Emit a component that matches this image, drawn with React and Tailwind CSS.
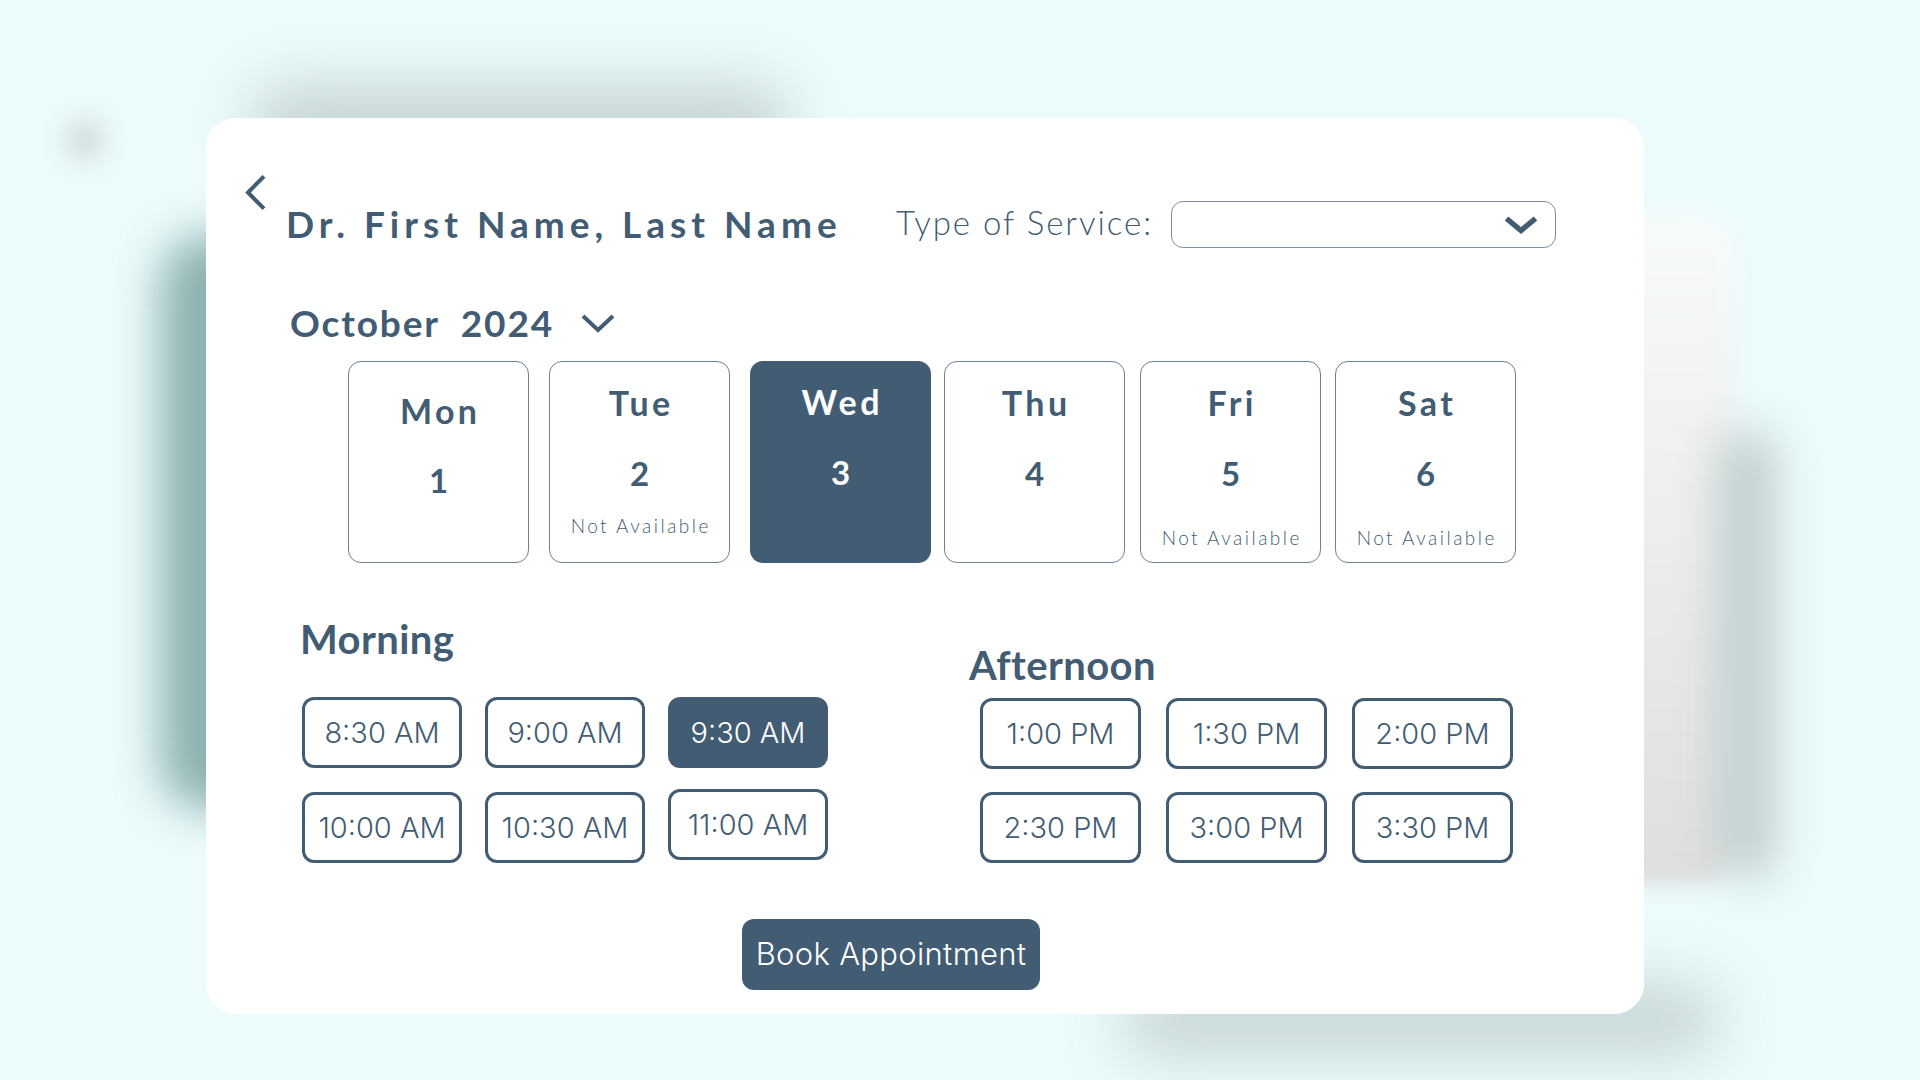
import React from "react";

const C = "#425d73";

function Chevron({ w, h, sw, className, dir = "down" }) {
  const pts =
    dir === "down"
      ? `${sw},${sw} ${w / 2},${h - sw} ${w - sw},${sw}`
      : `${w - sw},${sw / 1.2} ${sw},${h / 2} ${w - sw},${h - sw / 1.2}`;
  return (
    <svg width={w} height={h} viewBox={`0 0 ${w} ${h}`} className={className}>
      <polyline points={pts} fill="none" stroke={C} strokeWidth={sw} strokeLinejoin="miter" />
    </svg>
  );
}

function DayCard({ name, num, na, selected, nameTop, numGap, naGap, className }) {
  return (
    <div
      className={
        "w-[181px] h-[202px] rounded-[13px] flex flex-col items-center " +
        (selected ? "bg-[#425d73] text-white " : "border border-[#6b8194] text-[#425d73] ") +
        className
      }
      style={{ paddingTop: nameTop }}
    >
      <div className="text-[34px] leading-[34px] font-bold tracking-[0.1em] pl-[0.1em]">{name}</div>
      <div className="text-[33px] leading-[33px] font-bold" style={{ marginTop: numGap }}>
        {num}
      </div>
      {na && (
        <div
          className="text-[19px] leading-[20px] font-light tracking-[0.13em] pl-[0.13em]"
          style={{ marginTop: naGap }}
        >
          Not Available
        </div>
      )}
    </div>
  );
}

function Slot({ t, selected, className = "" }) {
  return (
    <div
      className={
        "w-[160px] h-[71px] rounded-[12px] flex items-center justify-center text-[29px] " +
        (selected ? "bg-[#425d73] text-white " : "border-[3px] border-[#425d73] text-[#425d73] ") +
        className
      }
      style={{ fontFamily: "Inter, sans-serif", fontWeight: 300 }}
    >
      {t}
    </div>
  );
}

export default function App() {
  return (
    <div
      className="relative w-[1920px] h-[1080px] overflow-hidden bg-[#ecfbfc]"
      style={{ fontFamily: "Lato, 'Liberation Sans', sans-serif" }}
    >
      {/* decorative blurred shadows behind the card */}
      <div className="absolute left-[250px] top-[85px] w-[540px] h-[80px] rounded-[40px] bg-[#c6d4d5] blur-[28px]" />
      <div className="absolute left-[66px] top-[118px] w-[38px] h-[44px] rounded-full bg-[#d2dfe0] blur-[12px]" />
      <div className="absolute left-[160px] top-[235px] w-[260px] h-[575px] rounded-[50px] bg-[#8db2b0] blur-[22px]" />
      <div className="absolute left-[1500px] top-[215px] w-[235px] h-[670px] rounded-[40px] bg-gradient-to-b from-[#f8fbfb] via-[#ececec] to-[#dedede] blur-[10px]" />
      <div className="absolute left-[1720px] top-[430px] w-[55px] h-[450px] rounded-[30px] bg-[#bfcccd] blur-[22px]" />
      <div className="absolute left-[1120px] top-[985px] w-[600px] h-[70px] rounded-full bg-[#bccaca] blur-[30px] opacity-80" />

      <div className="relative pt-[118px] pl-[206px]">
        <div className="w-[1438px] h-[896px] rounded-[30px] bg-white text-[#425d73] flex flex-col">
          {/* header */}
          <div className="flex items-start pt-[55px] pl-[38px]">
            <Chevron w={24} h={39} sw={4} dir="left" />
            <div className="ml-[18px] mt-[32px] w-[610px] text-[37px] leading-[37px] font-bold tracking-[0.135em]">
              Dr. First Name, Last Name
            </div>
            <div className="mt-[33px] w-[275px] text-[33px] leading-[33px] font-light tracking-[0.06em]">
              Type of Service:
            </div>
            <div className="mt-[28px] w-[385px] h-[47px] rounded-[12px] border border-[#7d8f9e] flex items-center justify-end pr-[14px]">
              <Chevron w={40} h={23} sw={5.5} />
            </div>
          </div>

          {/* month */}
          <div className="flex items-center mt-[56px] pl-[84px]">
            <div className="w-[289px] text-[37px] leading-[37px] font-bold tracking-[0.05em] whitespace-pre">
              October  2024
            </div>
            <Chevron w={38} h={22} sw={4} />
          </div>

          {/* days */}
          <div className="flex mt-[20px] pl-[142px]">
            <DayCard name="Mon" num="1" nameTop={32} numGap={35.5} />
            <DayCard name="Tue" num="2" na nameTop={24} numGap={36.5} naGap={26.5} className="ml-[20px]" />
            <DayCard name="Wed" num="3" selected nameTop={24} numGap={36.5} className="ml-[20px]" />
            <DayCard name="Thu" num="4" nameTop={24} numGap={36.5} className="ml-[13px]" />
            <DayCard name="Fri" num="5" na nameTop={24} numGap={36.5} naGap={38.5} className="ml-[15px]" />
            <DayCard name="Sat" num="6" na nameTop={24} numGap={36.5} naGap={38.5} className="ml-[14px]" />
          </div>

          {/* times */}
          <div className="flex items-start">
            <div className="w-[669px] ml-[94px] mt-[56px] flex flex-col">
              <div className="text-[40px] leading-[40px] font-bold tracking-[0.01em]">Morning</div>
              <div className="grid grid-cols-[160px_160px_160px] gap-x-[23px] gap-y-[24px] mt-[38px] ml-[2px]">
                <Slot t="8:30 AM" />
                <Slot t="9:00 AM" />
                <Slot t="9:30 AM" selected />
                <Slot t="10:00 AM" />
                <Slot t="10:30 AM" />
                <Slot t="11:00 AM" className="-mt-[3px]" />
              </div>
            </div>
            <div className="mt-[82px] flex flex-col">
              <div className="text-[40px] leading-[40px] font-bold tracking-[0.01em]">Afternoon</div>
              <div className="grid grid-cols-[161px_161px_161px] gap-x-[25px] gap-y-[23px] mt-[13px] ml-[11px]">
                <Slot t="1:00 PM" className="w-[161px]" />
                <Slot t="1:30 PM" className="w-[161px]" />
                <Slot t="2:00 PM" className="w-[161px]" />
                <Slot t="2:30 PM" className="w-[161px]" />
                <Slot t="3:00 PM" className="w-[161px]" />
                <Slot t="3:30 PM" className="w-[161px]" />
              </div>
            </div>
          </div>

          {/* book */}
          <div className="mt-[56px] ml-[536px]">
            <div
              className="w-[298px] h-[71px] rounded-[12px] bg-[#425d73] text-white text-[31px] flex items-center justify-center tracking-[0.01em]"
              style={{ fontFamily: "Inter, sans-serif", fontWeight: 300 }}
            >
              Book Appointment
            </div>
          </div>
        </div>
      </div>
    </div>
  );
}
